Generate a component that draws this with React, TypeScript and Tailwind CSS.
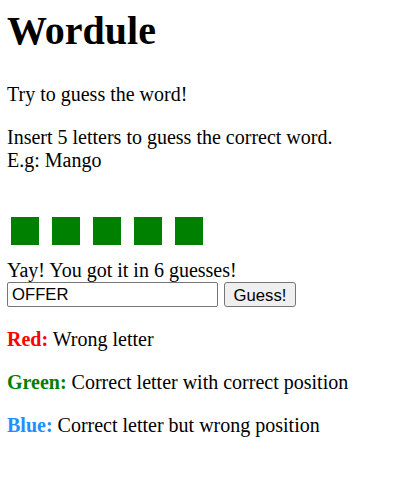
import { useState } from "react"

const legend = [
  { label: "Red:", color: "text-[#ff0000]", text: "Wrong letter" },
  { label: "Green:", color: "text-[#008000]", text: "Correct letter with correct position" },
  { label: "Blue:", color: "text-[#1e90ff]", text: "Correct letter but wrong position" },
]

export default function App() {
  const [guess, setGuess] = useState("OFFER")
  const tiles = ["O", "F", "F", "E", "R"]

  return (
    <div className="min-h-screen bg-white px-[7px] pt-2 text-[20px] text-black font-['Liberation_Serif','Times_New_Roman',serif]">
      <h1 className="text-[40px] font-bold leading-[46px]">Wordule</h1>
      <p className="mt-[29px] leading-[23px]">Try to guess the word!</p>
      <p className="mt-5 leading-[23px]">
        Insert 5 letters to guess the correct word.
        <br />
        E.g: Mango
      </p>

      <div className="mt-[45px] flex gap-[13px] pl-[4px]">
        {tiles.map((t, i) => (
          <div key={i} title={t} className="h-[28px] w-[28px] bg-[#008000]" />
        ))}
      </div>

      <p className="mt-[14px] leading-[23px]">Yay! You got it in 6 guesses!</p>
      <div className="flex items-center gap-[6px]">
        <input
          value={guess}
          onChange={(e) => setGuess(e.target.value)}
          className="h-[25px] w-[211px] rounded-[2px] border border-[#767676] bg-white px-[4px] text-[16.67px] text-black font-['Liberation_Sans',Arial,sans-serif] outline-none"
        />
        <button className="h-[25px] w-[72px] rounded-[3px] border border-[#767676] bg-[#efefef] text-[16.67px] text-black font-['Liberation_Sans',Arial,sans-serif]">
          Guess!
        </button>
      </div>

      <div className="mt-[21px] flex flex-col gap-5">
        {legend.map((l) => (
          <p key={l.label} className="leading-[23px]">
            <b className={l.color}>{l.label}</b> {l.text}
          </p>
        ))}
      </div>
    </div>
  )
}
